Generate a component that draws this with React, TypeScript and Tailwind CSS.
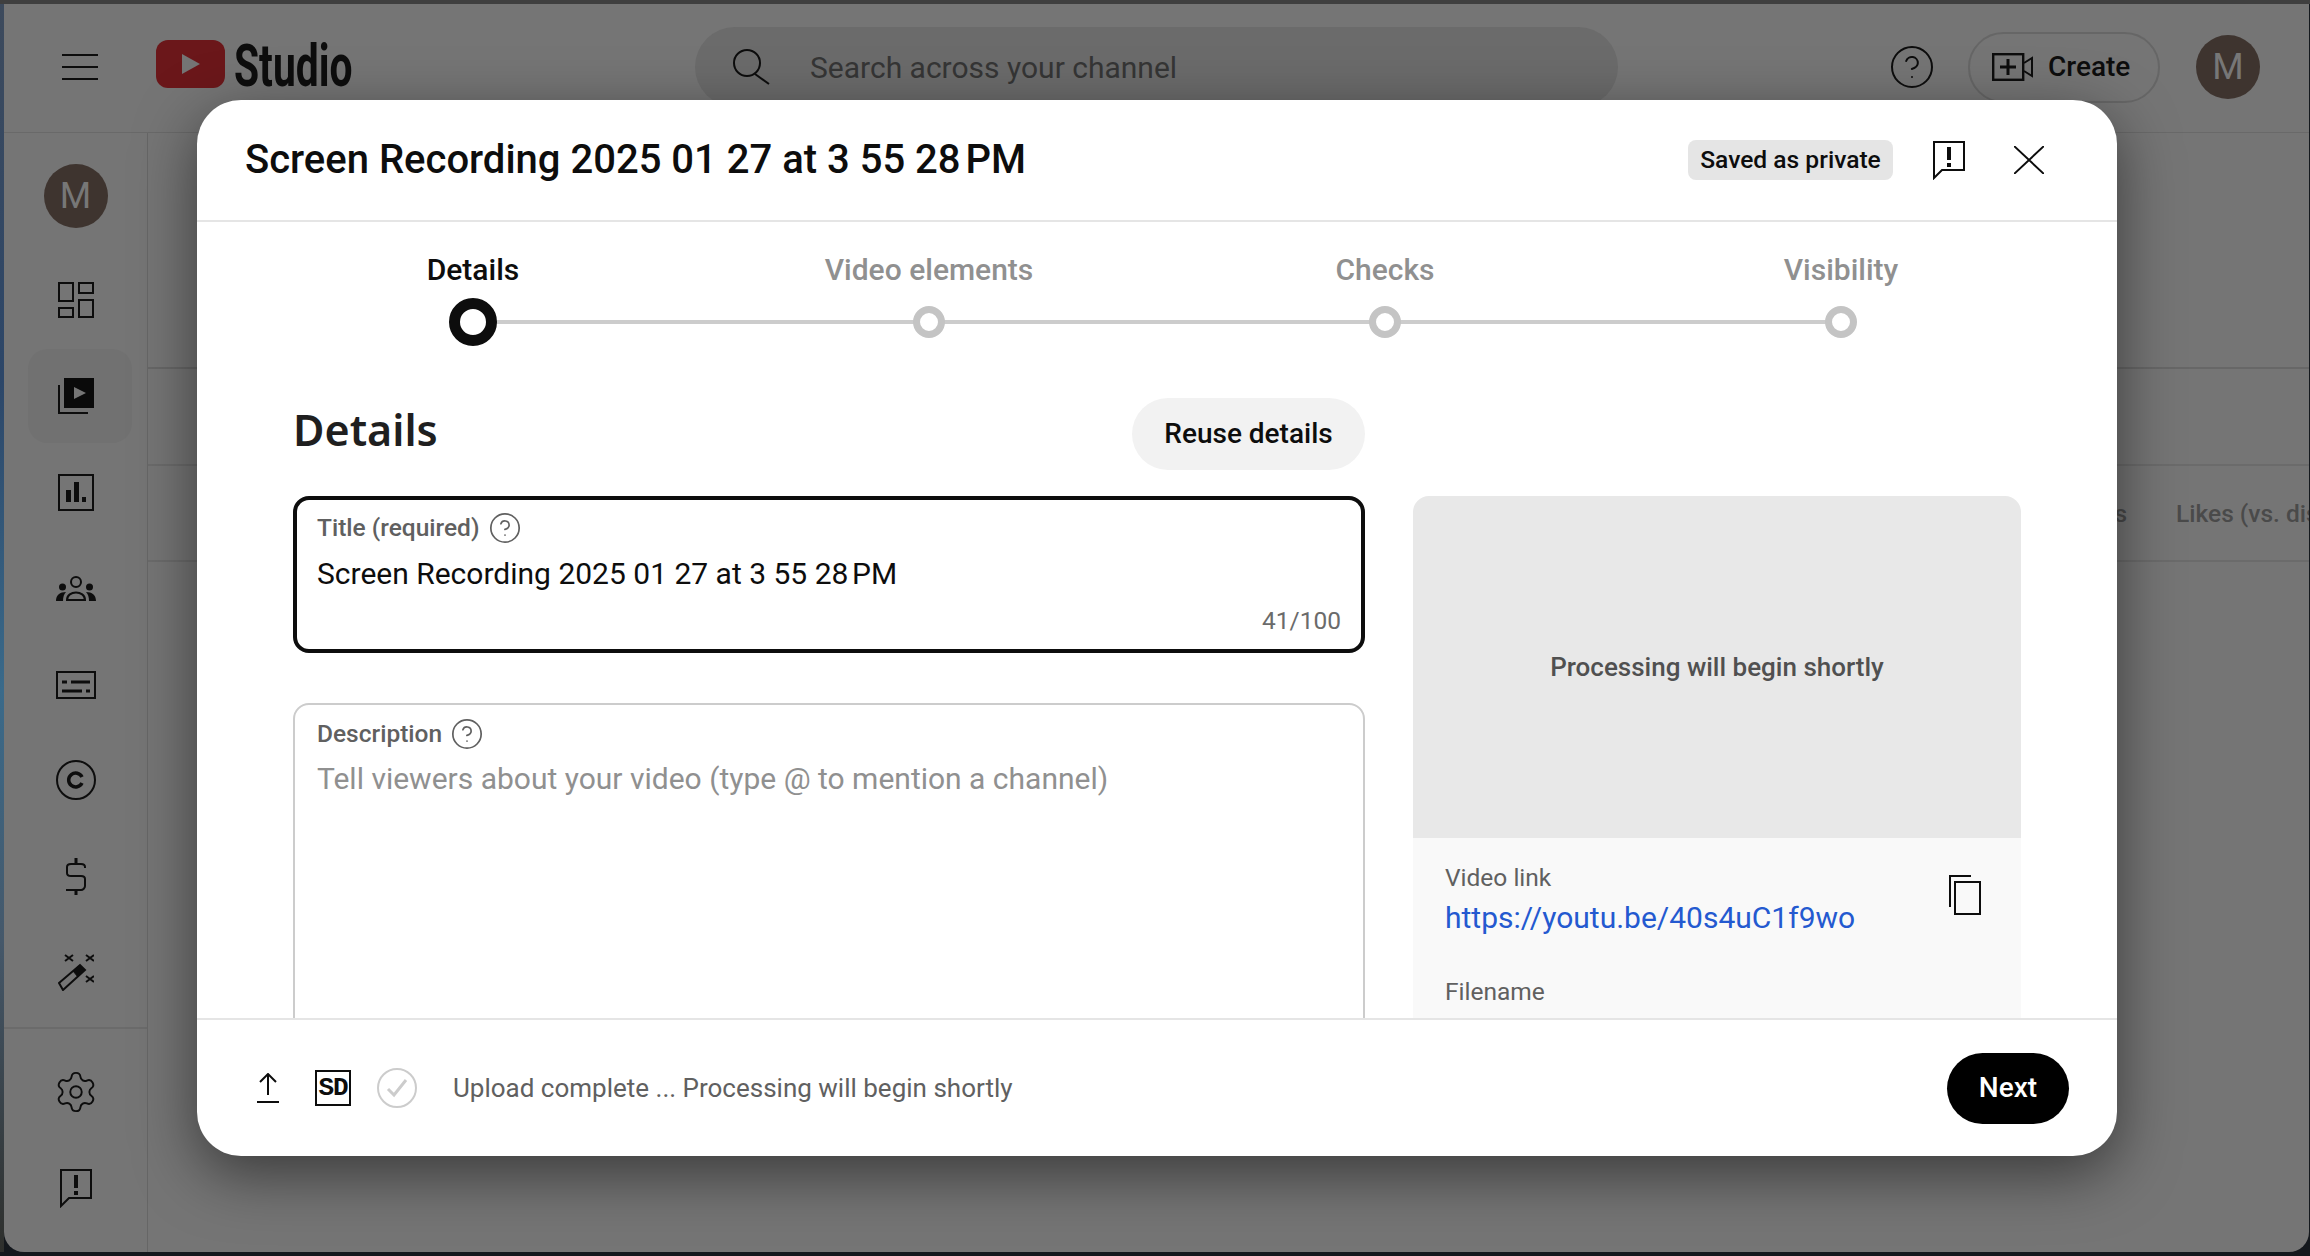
import { CircleHelp, Settings } from "lucide-react";

const recordingTitle = "Screen Recording 2025 01 27 at 3 55 28\u202fPM";

function ReportIcon({ className = "" }: { className?: string }) {
  return (
    <svg width="32" height="39" viewBox="0 0 32 39" fill="none" className={className}>
      <path d="M1 1H31V29H9L1 37Z" stroke="#0d0d0d" strokeWidth="2" />
      <rect x="14" y="6" width="4" height="13" fill="#0d0d0d" />
      <rect x="14" y="22" width="4" height="4" fill="#0d0d0d" />
    </svg>
  );
}

function SidebarIcon({ name }: { name: string }) {
  if (name === "dashboard")
    return (
      <svg width="36" height="36" viewBox="0 0 36 36" fill="none" stroke="#0d0d0d" strokeWidth="2">
        <rect x="1" y="1" width="14" height="18" />
        <rect x="21" y="1" width="14" height="10" />
        <rect x="1" y="26" width="14" height="9" />
        <rect x="21" y="18" width="14" height="17" />
      </svg>
    );
  if (name === "content")
    return (
      <svg width="36" height="36" viewBox="0 0 36 36" fill="none">
        <rect x="6" width="30" height="30" fill="#0a0a0a" />
        <path d="M16 9L28 15L16 21Z" fill="#757575" />
        <path d="M1 7V35H30" stroke="#0d0d0d" strokeWidth="2" />
      </svg>
    );
  if (name === "analytics")
    return (
      <svg width="36" height="37" viewBox="0 0 36 37" fill="none">
        <rect x="1" y="1" width="34" height="35" stroke="#0d0d0d" strokeWidth="2" />
        <rect x="8" y="16" width="5" height="12" fill="#0d0d0d" />
        <rect x="16" y="8" width="5" height="20" fill="#0d0d0d" />
        <rect x="24" y="23" width="4" height="5" fill="#0d0d0d" />
      </svg>
    );
  if (name === "audience")
    return (
      <svg width="40" height="25" viewBox="0 0 40 25" fill="none">
        <circle cx="20" cy="6" r="5" stroke="#0d0d0d" strokeWidth="2" />
        <path d="M11 24C11 14 29 14 29 24Z" stroke="#0d0d0d" strokeWidth="2" />
        <circle cx="6.5" cy="11" r="3.5" fill="#0d0d0d" />
        <circle cx="33.5" cy="11" r="3.5" fill="#0d0d0d" />
        <path d="M0 25C0 19 4 16 10 16C8 18 7 21 7 25Z" fill="#0d0d0d" />
        <path d="M40 25C40 19 36 16 30 16C32 18 33 21 33 25Z" fill="#0d0d0d" />
      </svg>
    );
  if (name === "subtitles")
    return (
      <svg width="40" height="28" viewBox="0 0 40 28" fill="none" stroke="#0d0d0d" className="mt-[2px]">
        <rect x="1" y="1" width="38" height="26" strokeWidth="2" />
        <path d="M6 11H11M15 11H34M6 20H26M30 20H34" strokeWidth="3" />
      </svg>
    );
  if (name === "copyright")
    return (
      <svg width="40" height="40" viewBox="0 0 40 40" fill="none" stroke="#0d0d0d">
        <circle cx="20" cy="20" r="19" strokeWidth="2" />
        <path d="M26 17A7 7 0 1 0 26 23" strokeWidth="3.5" />
      </svg>
    );
  if (name === "earn")
    return (
      <svg width="20" height="37" viewBox="0 0 20 37" fill="none" stroke="#0d0d0d">
        <path d="M10 0V5M10 32V37" strokeWidth="3" />
        <path d="M19 10V9C19 7 17 6 15 6H5C3 6 1 7 1 9V15C1 17 3 18 5 18H15C17 18 19 19 19 21V28C19 30 17 32 15 32H0" strokeWidth="2" />
      </svg>
    );
  if (name === "magic")
    return (
      <svg width="36" height="37" viewBox="0 0 36 37" fill="none" stroke="#0d0d0d">
        <path d="M1 29L22 11L27 16L5 36Z" strokeWidth="2" />
        <path d="M15 17L22 11L27 16L20 23Z" fill="#0d0d0d" strokeWidth="1" />
        <path d="M7 1L15 7M15 1L7 7M28 1L36 7M36 1L28 7M28 22L36 28M36 22L28 28" strokeWidth="2" />
      </svg>
    );
  if (name === "settings") return <Settings size={46} strokeWidth={1} color="#0d0d0d" />;
  return <ReportIcon />;
}

const sideItems = ["dashboard", "content", "analytics", "audience", "subtitles", "copyright", "earn", "magic"];

function Sidebar() {
  return (
    <aside className="flex w-[144px] shrink-0 flex-col items-center border-r border-[#666666] pt-[31px]">
      <div className="mb-6 flex h-16 w-16 items-center justify-center rounded-full bg-[#3e342f] text-[36px] text-[#777777]">
        M
      </div>
      <div className="w-full">
        {sideItems.map((item) => (
          <div key={item} className="flex h-24 items-center justify-center">
            <div
              className={
                item === "content"
                  ? "ml-[8px] flex h-[94px] w-[104px] items-center justify-center rounded-[20px] bg-[#717171] pr-[8px]"
                  : ""
              }
            >
              <SidebarIcon name={item} />
            </div>
          </div>
        ))}
      </div>
      <div className="mt-[7px] h-[2px] w-full bg-[#6b6b6b]" />
      <div className="mt-[15px] flex h-24 w-full items-center justify-center">
        <SidebarIcon name="settings" />
      </div>
      <div className="flex h-24 w-full items-center justify-center">
        <SidebarIcon name="feedback" />
      </div>
    </aside>
  );
}

function TopBar() {
  return (
    <header className="flex h-[129px] shrink-0 items-center border-b border-[#696969] pb-[2px] pl-[58px]">
      <div className="flex w-[36px] flex-col gap-[10px]">
        <span className="h-[2px] bg-[#0d0d0d]" />
        <span className="h-[2px] bg-[#0d0d0d]" />
        <span className="h-[2px] bg-[#0d0d0d]" />
      </div>
      <div className="mb-[7px] ml-[58px] flex h-[48px] w-[69px] items-center justify-center rounded-[12px] bg-[#6b171a]">
        <svg width="18" height="20" viewBox="0 0 18 20">
          <path d="M0 0L18 10L0 20Z" fill="#757575" />
        </svg>
      </div>
      <span className="mb-[3px] ml-[9px] w-[118px] origin-left scale-x-[0.68] text-[60px] leading-none font-bold whitespace-nowrap text-[#0d0d0d]">
        Studio
      </span>
      <div className="ml-[343px] flex h-[80px] w-[923px] items-center rounded-full bg-[#6b6b6b] pl-[38px]">
        <svg width="37" height="36" viewBox="0 0 37 36" fill="none" stroke="#0d0d0d" strokeWidth="2">
          <circle cx="14" cy="14" r="13" />
          <path d="M22 25L36 35" />
        </svg>
        <span className="ml-[40px] text-[30px] text-[#353535]">Search across your channel</span>
      </div>
      <CircleHelp size={48} strokeWidth={1} color="#0d0d0d" className="ml-[270px]" />
      <div className="ml-[32px] flex h-[71px] w-[192px] items-center rounded-full border-2 border-[#666666] pl-[22px]">
        <svg width="41" height="28" viewBox="0 0 41 28" fill="none" stroke="#0d0d0d">
          <rect x="1.2" y="1.2" width="30" height="25.6" strokeWidth="2.4" />
          <path d="M16 6V22M8 14H24" strokeWidth="3" />
          <path d="M32 10L40 5V23L32 18" strokeWidth="2" />
        </svg>
        <span className="ml-[15px] text-[28px] font-medium text-[#0d0d0d]">Create</span>
      </div>
      <div className="ml-[36px] flex h-16 w-16 items-center justify-center rounded-full bg-[#3e342f] text-[36px] text-[#777777]">
        M
      </div>
    </header>
  );
}

function BackgroundTable() {
  return (
    <div className="min-w-0 flex-1 overflow-hidden">
      <div className="h-[236px] border-b-2 border-[#676767]" />
      <div className="h-[97px] border-b-2 border-[#6b6b6b]" />
      <div className="flex h-[96px] items-center border-b-2 border-[#6b6b6b] pt-[2px] text-[24.5px] font-medium whitespace-nowrap text-[#4a4a4a]">
        <span className="w-[1979px] shrink-0 text-right">Comments</span>
        <span className="ml-[49px]">Likes (vs. dislikes)</span>
      </div>
    </div>
  );
}

function Step({ label, active, last }: { label: string; active?: boolean; last?: boolean }) {
  return (
    <div className="flex w-[456px] shrink-0 flex-col items-center">
      <div className={`mb-2 text-[30px] leading-[40px] font-medium ${active ? "text-[#0d0d0d]" : "text-[#909090]"}`}>
        {label}
      </div>
      <div className="relative flex h-12 w-full items-center justify-center">
        {!last && <div className="absolute top-[22px] left-1/2 h-1 w-full bg-[#cccccc]" />}
        {active ? (
          <div className="relative h-12 w-12 rounded-full border-[11px] border-[#0d0d0d] bg-white" />
        ) : (
          <div className="relative h-8 w-8 rounded-full border-[7px] border-[#c4c4c4] bg-white" />
        )}
      </div>
    </div>
  );
}

function Modal() {
  return (
    <div className="absolute top-[100px] left-[197px] flex h-[1056px] w-[1920px] flex-col overflow-hidden rounded-[44px] bg-white shadow-[0_18px_60px_rgba(0,0,0,0.5)]">
      <div className="flex h-[122px] shrink-0 items-center border-b-2 border-[#e5e5e5] pr-[73px] pl-[48px]">
        <h2 className="flex-1 text-[40px] font-medium whitespace-nowrap text-[#0d0d0d]">{recordingTitle}</h2>
        <span className="flex h-10 w-[205px] items-center justify-center rounded-lg bg-[#e5e5e5] text-[24.6px] font-medium text-[#0d0d0d]">
          Saved as private
        </span>
        <ReportIcon className="ml-[40px]" />
        <svg width="30" height="28" viewBox="0 0 30 28" className="ml-[49px]" fill="none" stroke="#0d0d0d" strokeWidth="2">
          <path d="M0 0L30 28M30 0L0 28" />
        </svg>
      </div>

      <div className="flex shrink-0 pt-[28px] pl-[48px]">
        <Step label="Details" active />
        <Step label="Video elements" />
        <Step label="Checks" />
        <Step label="Visibility" last />
      </div>

      <div className="flex min-h-0 flex-1 gap-12 overflow-hidden pt-[52px] pl-[96px]">
        <div className="w-[1072px] shrink-0">
          <div className="mb-[26px] flex h-[72px] items-center justify-between">
            <h1 className="pb-[8px] font-['Noto_Sans',sans-serif] text-[43px] font-semibold text-[#1f1f1f]">Details</h1>
            <button className="h-[72px] w-[233px] rounded-full bg-[#f2f2f2] text-[28px] font-medium text-[#0d0d0d]">
              Reuse details
            </button>
          </div>
          <div className="flex h-[157px] flex-col rounded-2xl border-4 border-[#0d0d0d] pt-[14px] pr-[20px] pl-[20px]">
            <div className="flex h-[28px] items-center gap-[8px] text-[24.5px] font-medium text-[#606060]">
              Title (required)
              <CircleHelp size={34} strokeWidth={1.2} color="#606060" />
            </div>
            <div className="mt-[12px] text-[30px] leading-[40px] whitespace-nowrap text-[#0d0d0d]">{recordingTitle}</div>
            <div className="mt-[13px] text-right text-[24.5px] leading-[28px] text-[#6b6b6b]">41/100</div>
          </div>
          <div className="mt-[50px] h-[400px] rounded-2xl border-2 border-[#cccccc] px-[22px] pt-[15px]">
            <div className="flex h-[28px] items-center gap-[8px] text-[24.5px] font-medium text-[#606060]">
              Description
              <CircleHelp size={34} strokeWidth={1.2} color="#606060" />
            </div>
            <div className="mt-[11px] text-[30px] leading-[40px] text-[#909090]">
              Tell viewers about your video (type @ to mention a channel)
            </div>
          </div>
        </div>

        <div className="mt-[98px] flex w-[608px] shrink-0 flex-col overflow-hidden rounded-t-2xl">
          <div className="flex h-[342px] shrink-0 items-center justify-center bg-[#e8e8e8] text-[26px] font-medium text-[#505050]">
            Processing will begin shortly
          </div>
          <div className="flex-1 bg-[#f9f9f9] pt-[24px] pl-[32px]">
            <div className="flex justify-between pr-[40px]">
              <div>
                <div className="text-[24.5px] leading-[32px] text-[#606060]">Video link</div>
                <div className="mt-1 text-[30px] leading-[40px] text-[#2459d0]">https://youtu.be/40s4uC1f9wo</div>
              </div>
              <svg width="32" height="40" viewBox="0 0 32 40" className="mt-[13px]" fill="none" stroke="#0d0d0d" strokeWidth="2">
                <path d="M1 32V1H22" />
                <rect x="6" y="7" width="25" height="32" />
              </svg>
            </div>
            <div className="mt-[38px] text-[24.5px] leading-[32px] text-[#606060]">Filename</div>
          </div>
        </div>
      </div>

      <div className="flex h-[138px] shrink-0 items-center border-t-2 border-[#e5e5e5] pr-[48px] pl-[60px]">
        <svg width="22" height="30" viewBox="0 0 22 30" fill="none" stroke="#0d0d0d" strokeWidth="2">
          <path d="M11 22V2M3 9L11 1L19 9M0 29H22" />
        </svg>
        <div className="ml-[36px] flex h-9 w-9 items-center justify-center border-[2.5px] border-[#0d0d0d] font-['Liberation_Mono',monospace] text-[26px] leading-none font-bold text-[#0d0d0d]">
          <span className="tracking-[-1px]">SD</span>
        </div>
        <svg width="40" height="40" viewBox="0 0 40 40" className="ml-[26px]" fill="none" stroke="#cccccc">
          <circle cx="20" cy="20" r="19" strokeWidth="2" />
          <path d="M11 21L17 27L29 12" strokeWidth="3" />
        </svg>
        <span className="ml-[36px] flex-1 text-[26px] text-[#606060]">Upload complete ... Processing will begin shortly</span>
        <button className="h-[71px] w-[122px] rounded-full bg-black text-[28px] font-medium text-white">Next</button>
      </div>
    </div>
  );
}

export default function App() {
  return (
    <div className="relative flex h-[1256px] w-[2310px] flex-col overflow-hidden bg-[#14181d] pb-1 font-['Roboto',sans-serif]">
      <div className="h-1 shrink-0 bg-[#3f3f3f]" />
      <div className="flex min-h-0 flex-1">
        <div className="w-1 shrink-0 bg-[linear-gradient(180deg,#3d4a5c_0%,#2c4668_30%,#3a6a8a_55%,#45586a_75%,#2e2f2c_100%)]" />
        <div className="mr-px flex min-w-0 flex-1 flex-col overflow-hidden rounded-b-[20px] bg-[#757575]">
          <TopBar />
          <div className="flex min-h-0 flex-1">
            <Sidebar />
            <BackgroundTable />
          </div>
        </div>
      </div>
      <Modal />
    </div>
  );
}
